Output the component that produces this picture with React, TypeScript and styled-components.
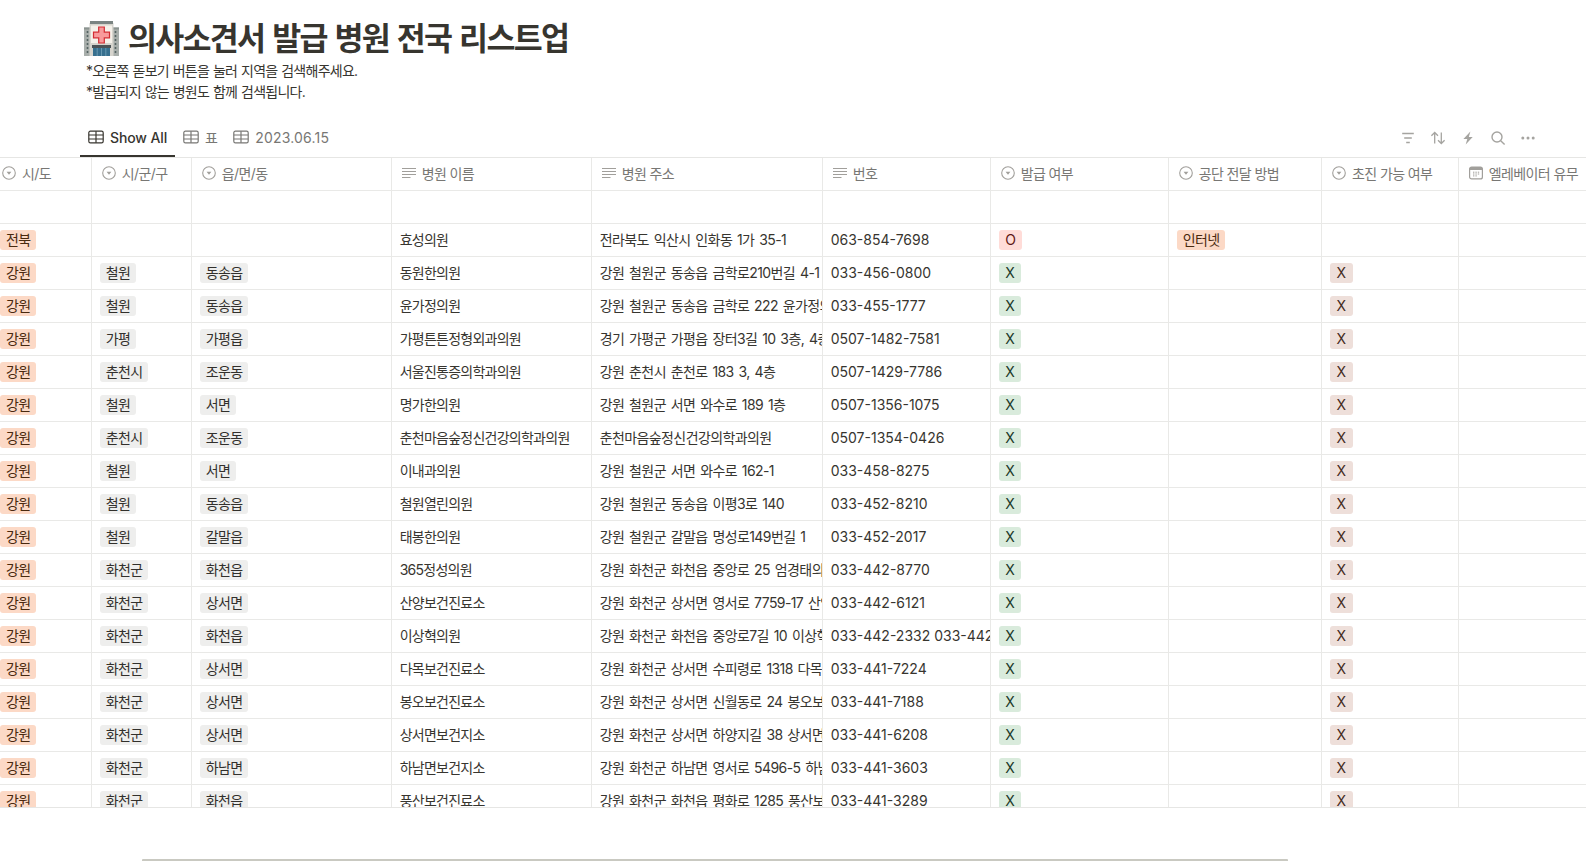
import React from "react";
import styled, { createGlobalStyle } from "styled-components";

const Global = createGlobalStyle`
  html, body { margin: 0; padding: 0; background: #fff; }
  #root { height: 861px; overflow: hidden; }
  * { box-sizing: border-box; }
`;

const FONT = `Inter, "Noto Sans CJK KR", "Noto Sans", sans-serif`;
const COLS = "91.7px 100px 200px 200px 231px 168px 178px 153.3px 136.7px 1fr";

const Page = styled.div`
  width: 1586px;
  height: 861px;
  display: flex;
  flex-direction: column;
  font-family: ${FONT};
  color: #37352f;
  background: #fff;
`;
const Heading = styled.header`
  padding: 18px 0 0 84px;
  height: 118px;
`;
const Title = styled.h1`
  margin: 0 0 2px;
  height: 41px;
  display: flex;
  align-items: center;
  gap: 9px;
  font-size: 31.5px;
  line-height: 41px;
  font-weight: 700;
  letter-spacing: -1.7px;
  word-spacing: 2px;
`;
const Note = styled.p`
  margin: 0 0 0 2px;
  font-size: 14px;
  line-height: 20.5px;
  letter-spacing: -0.74px;
  word-spacing: 0.6px;
`;
const ViewBar = styled.nav`
  height: 38.5px;
  display: flex;
  align-items: stretch;
  justify-content: space-between;
  padding: 0 50px 0 80px;
`;
const Tabs = styled.div`
  display: flex;
`;
const Tab = styled.div<{ $active?: boolean }>`
  display: flex;
  align-items: center;
  gap: 6px;
  padding: 2px 8px 0;
  font-size: 14px;
  font-weight: ${(p) => (p.$active ? 500 : 400)};
  letter-spacing: ${(p) => (p.$active ? "-0.12px" : "0.2px")};
  color: ${(p) => (p.$active ? "#37352f" : "#787774")};
  border-bottom: 2px solid ${(p) => (p.$active ? "#37352f" : "transparent")};
  margin-right: ${(p) => (p.$active ? "0" : "-1px")};
`;
const Tools = styled.div`
  display: flex;
  align-items: center;
  gap: 14px;
  color: #a5a4a0;
  padding-top: 1px;
`;
const Table = styled.section`
  height: 651px;
  overflow: hidden;
  border-top: 1px solid #e6e6e4;
  border-bottom: 1px solid #e6e6e4;
`;
const Row = styled.div`
  display: grid;
  grid-template-columns: ${COLS};
  height: 33px;
`;
const HeadCell = styled.div<{ $first?: boolean }>`
  display: flex;
  align-items: center;
  gap: 6px;
  min-width: 0;
  padding-left: ${(p) => (p.$first ? "2px" : "10px")};
  padding-bottom: 2px;
  border-right: 1px solid #e9e9e7;
  border-bottom: 1px solid #e9e9e7;
  font-size: 14px;
  letter-spacing: -0.6px;
  color: #787774;
  white-space: nowrap;
  overflow: hidden;
  &:last-child { border-right: 0; }
`;
const Cell = styled.div<{ $first?: boolean }>`
  display: flex;
  align-items: center;
  min-width: 0;
  padding-left: ${(p) => (p.$first ? "0" : "8px")};
  border-right: 1px solid #e9e9e7;
  border-bottom: 1px solid #e9e9e7;
  font-size: 14px;
  white-space: nowrap;
  overflow: hidden;
  &:last-child { border-right: 0; }
`;
const NameCell = styled(Cell)`
  letter-spacing: -0.75px;
  padding-bottom: 2px;
`;
const AddressCell = styled(Cell)`
  letter-spacing: -0.6px;
  word-spacing: 1.5px;
  padding-bottom: 2px;
`;
const Tag = styled.span<{ $bg: string; $fg: string; $latin?: boolean }>`
  display: inline-flex;
  align-items: center;
  height: 20px;
  padding: 0 ${(p) => (p.$latin ? "6.5px" : "6px")};
  border-radius: 3px;
  background: ${(p) => p.$bg};
  color: ${(p) => p.$fg};
  font-size: 14px;
  line-height: 20px;
  letter-spacing: ${(p) => (p.$latin ? "0" : "-0.65px")};
  flex: none;
`;
const ScrollTrack = styled.div`
  height: 2px;
  width: 1146px;
  margin: 51px 0 0 142px;
  background: #c9c9c1;
  border-radius: 1px 1px 0 0;
`;

const TableIcon = () => (
  <svg width="16" height="14" viewBox="0 0 16 14" fill="none" stroke="currentColor" strokeWidth="1.2">
    <rect x="0.8" y="1.2" width="14.4" height="11.6" rx="1.6" />
    <path d="M0.8 5h14.4M0.8 9h14.4M8 1.2v11.6" />
  </svg>
);
const SelectIcon = () => (
  <svg width="14" height="14" viewBox="0 0 14 14" fill="none" style={{ flex: "none" }}>
    <circle cx="7" cy="7" r="6.3" stroke="#a19f9b" strokeWidth="1.1" />
    <path d="M4.6 5.7h4.8L7 8.8z" fill="#a19f9b" />
  </svg>
);
const TextIcon = () => (
  <svg width="14" height="14" viewBox="0 0 14 14" fill="none" stroke="#a19f9b" strokeWidth="1" style={{ flex: "none" }}>
    <path d="M0 2.5h14M0 5.5h14M0 8.5h14M0 11.5h8.5" />
  </svg>
);
const DateIcon = () => (
  <svg width="14" height="14" viewBox="0 0 14 14" fill="none" style={{ flex: "none" }}>
    <rect x="0.6" y="1.1" width="12.8" height="11.8" rx="2" stroke="#a19f9b" strokeWidth="1.2" />
    <path d="M0.6 3.2c0-1.2.9-2.1 2-2.1h8.8c1.1 0 2 .9 2 2.1v.8H.6z" fill="#a19f9b" />
    <path d="M4 6.2h1.4M6.4 6.2h1.4M8.8 6.2h1.4M4 8h1.4M6.4 8h1.4M8.8 8h1.4M4 9.9h1.4M6.4 9.9h1.4" stroke="#a19f9b" strokeWidth="1" />
  </svg>
);
const FilterIcon = () => (
  <svg width="16" height="16" viewBox="0 0 16 16" fill="none" stroke="currentColor" strokeWidth="1.5">
    <path d="M2.2 3.4h11.6M4.2 8h7.6M6.2 12.6h3.6" />
  </svg>
);
const SortIcon = () => (
  <svg width="16" height="16" viewBox="0 0 16 16" fill="none" stroke="currentColor" strokeWidth="1.3">
    <path d="M4.7 13.6V2.6M1.4 5.8l3.3-3.3L8 5.8M11.3 2.4v11M8 10.2l3.3 3.3 3.3-3.3" />
  </svg>
);
const BoltIcon = () => (
  <svg width="16" height="16" viewBox="0 0 16 16" fill="currentColor">
    <path d="M10.4 1.4 3.4 9h3.9L5.7 14.6 12.7 7H8.8z" />
  </svg>
);
const SearchIcon = () => (
  <svg width="16" height="16" viewBox="0 0 16 16" fill="none" stroke="currentColor" strokeWidth="1.4">
    <circle cx="7" cy="7" r="5" />
    <path d="M10.7 10.7l3.9 3.9" />
  </svg>
);
const MoreIcon = () => (
  <svg width="16" height="16" viewBox="0 0 16 16" fill="currentColor">
    <circle cx="2.8" cy="8" r="1.5" />
    <circle cx="8" cy="8" r="1.5" />
    <circle cx="13.2" cy="8" r="1.5" />
  </svg>
);
const HospitalEmoji = () => (
  <svg width="35" height="35" viewBox="0 0 35 35" style={{ flex: "none" }}>
    <rect x="0" y="6.5" width="35" height="28.5" fill="#a8aeab" />
    <rect x="0" y="6.5" width="35" height="2" fill="#8b9390" />
    <rect x="5.5" y="2" width="24" height="33" fill="#d6d4cd" />
    <rect x="6" y="0" width="23" height="3" fill="#7b8482" />
    <rect x="7" y="4.5" width="21" height="17.5" fill="#f5f1ea" />
    <path d="M14.7 6h5.6v5.2h5.2v5.6h-5.2V22h-5.6v-5.2H9.5v-5.6h5.2z" fill="#f89a9b" stroke="#d42c33" strokeWidth="1.2" />
    <path d="M2.7 11h1.6M2.7 15h1.6M2.7 19h1.6M2.7 23h1.6M2.7 27h1.6M2.7 31h1.6M30.7 11h1.6M30.7 15h1.6M30.7 19h1.6M30.7 23h1.6M30.7 27h1.6M30.7 31h1.6" stroke="#566463" strokeWidth="2.2" />
    <rect x="8" y="24" width="19" height="3" fill="#4b5357" />
    <rect x="9" y="27" width="17" height="8" fill="#37708f" />
    <path d="M13.2 27v8M17.5 27v8M21.8 27v8" stroke="#6d9db4" strokeWidth="0.9" />
  </svg>
);

const ORANGE = { $bg: "#fcd9c6", $fg: "#49290e" };
const GRAY = { $bg: "#eeeeed", $fg: "#32302c" };
const GREEN = { $bg: "#d9ebdc", $fg: "#1c3829" };
const RED = { $bg: "#ffdcd8", $fg: "#5d1715" };
const BROWN = { $bg: "#eedfda", $fg: "#442a1e" };

const columns: { name: string; icon: React.ReactNode }[] = [
  { name: "시/도", icon: <SelectIcon /> },
  { name: "시/군/구", icon: <SelectIcon /> },
  { name: "읍/면/동", icon: <SelectIcon /> },
  { name: "병원 이름", icon: <TextIcon /> },
  { name: "병원 주소", icon: <TextIcon /> },
  { name: "번호", icon: <TextIcon /> },
  { name: "발급 여부", icon: <SelectIcon /> },
  { name: "공단 전달 방법", icon: <SelectIcon /> },
  { name: "초진 가능 여부", icon: <SelectIcon /> },
  { name: "엘레베이터 유무", icon: <DateIcon /> },
];

type R = [string, string, string, string, string];
const rows: R[] = [
  ["철원", "동송읍", "동원한의원", "강원 철원군 동송읍 금학로210번길 4-1", "033-456-0800"],
  ["철원", "동송읍", "윤가정의원", "강원 철원군 동송읍 금학로 222 윤가정의원", "033-455-1777"],
  ["가평", "가평읍", "가평튼튼정형외과의원", "경기 가평군 가평읍 장터3길 10 3층, 4층", "0507-1482-7581"],
  ["춘천시", "조운동", "서울진통증의학과의원", "강원 춘천시 춘천로 183 3, 4층", "0507-1429-7786"],
  ["철원", "서면", "명가한의원", "강원 철원군 서면 와수로 189 1층", "0507-1356-1075"],
  ["춘천시", "조운동", "춘천마음숲정신건강의학과의원", "춘천마음숲정신건강의학과의원", "0507-1354-0426"],
  ["철원", "서면", "이내과의원", "강원 철원군 서면 와수로 162-1", "033-458-8275"],
  ["철원", "동송읍", "철원열린의원", "강원 철원군 동송읍 이평3로 140", "033-452-8210"],
  ["철원", "갈말읍", "태봉한의원", "강원 철원군 갈말읍 명성로149번길 1", "033-452-2017"],
  ["화천군", "화천읍", "365정성의원", "강원 화천군 화천읍 중앙로 25 엄경태의원", "033-442-8770"],
  ["화천군", "상서면", "산양보건진료소", "강원 화천군 상서면 영서로 7759-17 산양보건진료소", "033-442-6121"],
  ["화천군", "화천읍", "이상혁의원", "강원 화천군 화천읍 중앙로7길 10 이상혁의원", "033-442-2332 033-442-2333"],
  ["화천군", "상서면", "다목보건진료소", "강원 화천군 상서면 수피령로 1318 다목보건진료소", "033-441-7224"],
  ["화천군", "상서면", "봉오보건진료소", "강원 화천군 상서면 신월동로 24 봉오보건진료소", "033-441-7188"],
  ["화천군", "상서면", "상서면보건지소", "강원 화천군 상서면 하양지길 38 상서면 보건지소", "033-441-6208"],
  ["화천군", "하남면", "하남면보건지소", "강원 화천군 하남면 영서로 5496-5 하남면보건지소", "033-441-3603"],
  ["화천군", "화천읍", "풍산보건진료소", "강원 화천군 화천읍 평화로 1285 풍산보건진료소", "033-441-3289"],
];

export default function App() {
  return (
    <Page>
      <Global />
      <Heading>
        <Title>
          <HospitalEmoji />
          의사소견서 발급 병원 전국 리스트업
        </Title>
        <Note>*오른쪽 돋보기 버튼을 눌러 지역을 검색해주세요.</Note>
        <Note>*발급되지 않는 병원도 함께 검색됩니다.</Note>
      </Heading>
      <ViewBar>
        <Tabs>
          <Tab $active>
            <TableIcon />
            Show All
          </Tab>
          <Tab>
            <TableIcon />표
          </Tab>
          <Tab>
            <TableIcon />
            2023.06.15
          </Tab>
        </Tabs>
        <Tools>
          <FilterIcon />
          <SortIcon />
          <BoltIcon />
          <SearchIcon />
          <MoreIcon />
        </Tools>
      </ViewBar>
      <Table>
        <Row>
          {columns.map((c, i) => (
            <HeadCell key={c.name} $first={i === 0}>
              {c.icon}
              {c.name}
            </HeadCell>
          ))}
        </Row>
        <Row>
          {columns.map((c) => (
            <Cell key={c.name} />
          ))}
        </Row>
        <Row>
          <Cell $first>
            <Tag {...ORANGE}>전북</Tag>
          </Cell>
          <Cell />
          <Cell />
          <NameCell>효성의원</NameCell>
          <AddressCell>전라북도 익산시 인화동 1가 35-1</AddressCell>
          <Cell>063-854-7698</Cell>
          <Cell>
            <Tag {...RED} $latin>O</Tag>
          </Cell>
          <Cell>
            <Tag {...ORANGE}>인터넷</Tag>
          </Cell>
          <Cell />
          <Cell />
        </Row>
        {rows.map((r) => (
          <Row key={r[2]}>
            <Cell $first>
              <Tag {...ORANGE}>강원</Tag>
            </Cell>
            <Cell>
              <Tag {...GRAY}>{r[0]}</Tag>
            </Cell>
            <Cell>
              <Tag {...GRAY}>{r[1]}</Tag>
            </Cell>
            <NameCell>{r[2]}</NameCell>
            <AddressCell>{r[3]}</AddressCell>
            <Cell>{r[4]}</Cell>
            <Cell>
              <Tag {...GREEN} $latin>X</Tag>
            </Cell>
            <Cell />
            <Cell>
              <Tag {...BROWN} $latin>X</Tag>
            </Cell>
            <Cell />
          </Row>
        ))}
      </Table>
      <ScrollTrack />
    </Page>
  );
}
